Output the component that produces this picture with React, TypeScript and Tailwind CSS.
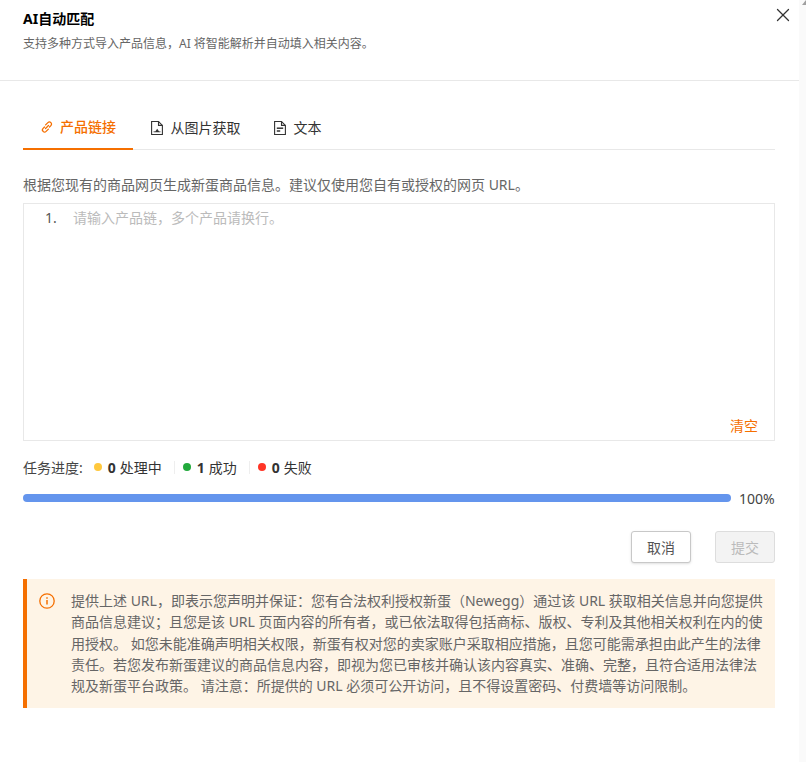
import { X } from 'lucide-react';

const font = '[font-family:"Noto_Sans","Noto_Sans_CJK_SC",sans-serif]';

function LinkIcon() {
  return (
    <svg viewBox="0 0 14 14" className="h-[14px] w-[14px]" fill="none" stroke="currentColor" strokeWidth="1.3" strokeLinecap="round">
      <path d="M5.6 4.9 7.9 2.6a2.1 2.1 0 0 1 3 3L9.5 7" />
      <path d="M8.4 9.1 6.1 11.4a2.1 2.1 0 0 1-3-3L4.5 7" />
      <path d="M5.5 8.5 8.5 5.5" />
    </svg>
  );
}

function ImageFileIcon() {
  return (
    <svg viewBox="0 0 16 16" className="h-4 w-4" fill="none" stroke="currentColor" strokeWidth="1.1">
      <path d="M2.6 1.5h6.9l3.9 3.9v9.1H2.6z" />
      <path d="M9.5 1.5v3.9h3.9" />
      <path d="M4.6 12.2h6.8v-1l-1.3.2-1.9-2.6-2 2.6-1.6-.2z" fill="currentColor" stroke="none" />
    </svg>
  );
}

function TextFileIcon() {
  return (
    <svg viewBox="0 0 16 16" className="h-4 w-4" fill="none" stroke="currentColor" strokeWidth="1.1">
      <path d="M2.6 1.5h6.9l3.9 3.9v9.1H2.6z" />
      <path d="M9.5 1.5v3.9h3.9" />
      <path d="M4.8 8.2h6.4" strokeWidth="1.5" />
      <path d="M4.8 11h3.4" strokeWidth="1.5" />
    </svg>
  );
}

function InfoIcon() {
  return (
    <svg viewBox="0 0 16 16" className="h-4 w-4 shrink-0 text-[#f56f00]" fill="none" stroke="currentColor" strokeWidth="1.3">
      <circle cx="8" cy="8" r="7.2" />
      <path d="M8 7v4.6" strokeWidth="1.5" />
      <path d="M8 4.2v1.5" strokeWidth="1.5" />
    </svg>
  );
}

function Tab({
  icon,
  label,
  active,
  width,
}: {
  icon: React.ReactNode;
  label: string;
  active?: boolean;
  width: string;
}) {
  return (
    <div
      className={`-mb-px flex h-[45px] items-center justify-center gap-[6px] text-[14px] ${width} ${
        active ? 'border-b-2 border-[#f56f00] font-medium text-[#f56f00]' : 'text-[#333333]'
      }`}
    >
      {icon}
      <span>{label}</span>
    </div>
  );
}

function Stat({ color, count, label }: { color: string; count: string; label: string }) {
  return (
    <div className="flex items-center">
      <span className={`h-2 w-2 rounded-full ${color}`} />
      <span className="ml-[6px] text-[14px] font-bold text-[#333333]">{count}</span>
      <span className="ml-[4px] text-[14px] text-[#333333]">{label}</span>
    </div>
  );
}

export default function App() {
  return (
    <div className={`flex h-[762px] w-[806px] overflow-hidden bg-white ${font}`}>
      <div className="relative w-[799px]">
        <button className="absolute top-[4px] right-[5px] text-[#333333]">
          <X className="h-[22px] w-[22px]" strokeWidth={1.4} />
        </button>

        <div className="h-[81px] border-b border-[#e8e8e8] pt-[9px] pl-[23px]">
          <h2 className="text-[14px] leading-[20px] font-bold text-black">AI自动匹配</h2>
          <p className="mt-[5px] text-[12px] leading-[20px] text-[#666666]">
            支持多种方式导入产品信息，AI 将智能解析并自动填入相关内容。
          </p>
        </div>

        <div className="pr-[24px] pl-[23px]">
          <div className="mt-[24px] flex border-b border-[#e8e8e8]">
            <Tab width="w-[110px]" active label="产品链接" icon={<LinkIcon />} />
            <Tab width="w-[123px]" label="从图片获取" icon={<ImageFileIcon />} />
            <Tab width="w-[81px]" label="文本" icon={<TextFileIcon />} />
          </div>

          <p className="mt-[25px] text-[14px] leading-[20px] text-[#666666]">
            根据您现有的商品网页生成新蛋商品信息。建议仅使用您自有或授权的网页 URL。
          </p>

          <div className="mt-[8px] flex h-[238px] flex-col justify-between border border-[#e8e8e8] pt-[4px] pr-[16px] pb-[4px] pl-[21px]">
            <div className="flex text-[14px] leading-[20px]">
              <span className="w-[28px] text-[#555555]">1.</span>
              <span className="text-[#bbbbbb]">请输入产品链，多个产品请换行。</span>
            </div>
            <div className="text-right text-[14px] leading-[20px] text-[#f56f00]">清空</div>
          </div>

          <div className="mt-[16px] flex h-[20px] items-center text-[14px] text-[#444444]">
            <span>任务进度:</span>
            <div className="ml-[11px] flex items-center">
              <Stat color="bg-[#ffc83d]" count="0" label="处理中" />
              <span className="mr-[8px] ml-[12px] h-[13px] w-px bg-[#eeeeee]" />
              <Stat color="bg-[#22a93c]" count="1" label="成功" />
              <span className="mr-[8px] ml-[12px] h-[13px] w-px bg-[#eeeeee]" />
              <Stat color="bg-[#ff3526]" count="0" label="失败" />
            </div>
          </div>

          <div className="mt-[11px] flex h-[20px] items-center">
            <div className="h-2 w-[708px] rounded-full bg-[#6495ed]" />
            <span className="ml-[8px] text-[14px] text-[#444444]">100%</span>
          </div>

          <div className="mt-[23px] flex justify-end gap-[24px]">
            <button className="h-[32px] w-[60px] rounded-[3px] border border-[#c8c8c8] bg-white text-[14px] text-[#555555] shadow-sm">
              取消
            </button>
            <button className="h-[32px] w-[60px] rounded-[3px] border border-[#dddddd] bg-[#f3f3f3] text-[14px] text-[#bbbbbb]">
              提交
            </button>
          </div>

          <div className="mt-[16px] flex h-[129px] border-l-4 border-[#f56f00] bg-[#fef4e6] pt-[11px] pl-[12px]">
            <div className="pt-[3px]">
              <InfoIcon />
            </div>
            <p className="ml-[16px] w-[692px] text-[14px] leading-[21.25px] text-[#666666]">
              提供上述 URL，即表示您声明并保证：您有合法权利授权新蛋（Newegg）通过该 URL 获取相关信息并向您提供商品信息建议；且您是该 URL 页面内容的所有者，或已依法取得包括商标、版权、专利及其他相关权利在内的使用授权。 如您未能准确声明相关权限，新蛋有权对您的卖家账户采取相应措施，且您可能需承担由此产生的法律责任。若您发布新蛋建议的商品信息内容，即视为您已审核并确认该内容真实、准确、完整，且符合适用法律法规及新蛋平台政策。 请注意：所提供的 URL 必须可公开访问，且不得设置密码、付费墙等访问限制。
            </p>
          </div>
        </div>
      </div>

      <div className="flex w-[7px] items-start justify-end bg-[#fafafa]">
        <span className="h-0 w-0 border-b-[5px] border-l-[4px] border-b-[#a0a0a0] border-l-transparent" />
      </div>
    </div>
  );
}
